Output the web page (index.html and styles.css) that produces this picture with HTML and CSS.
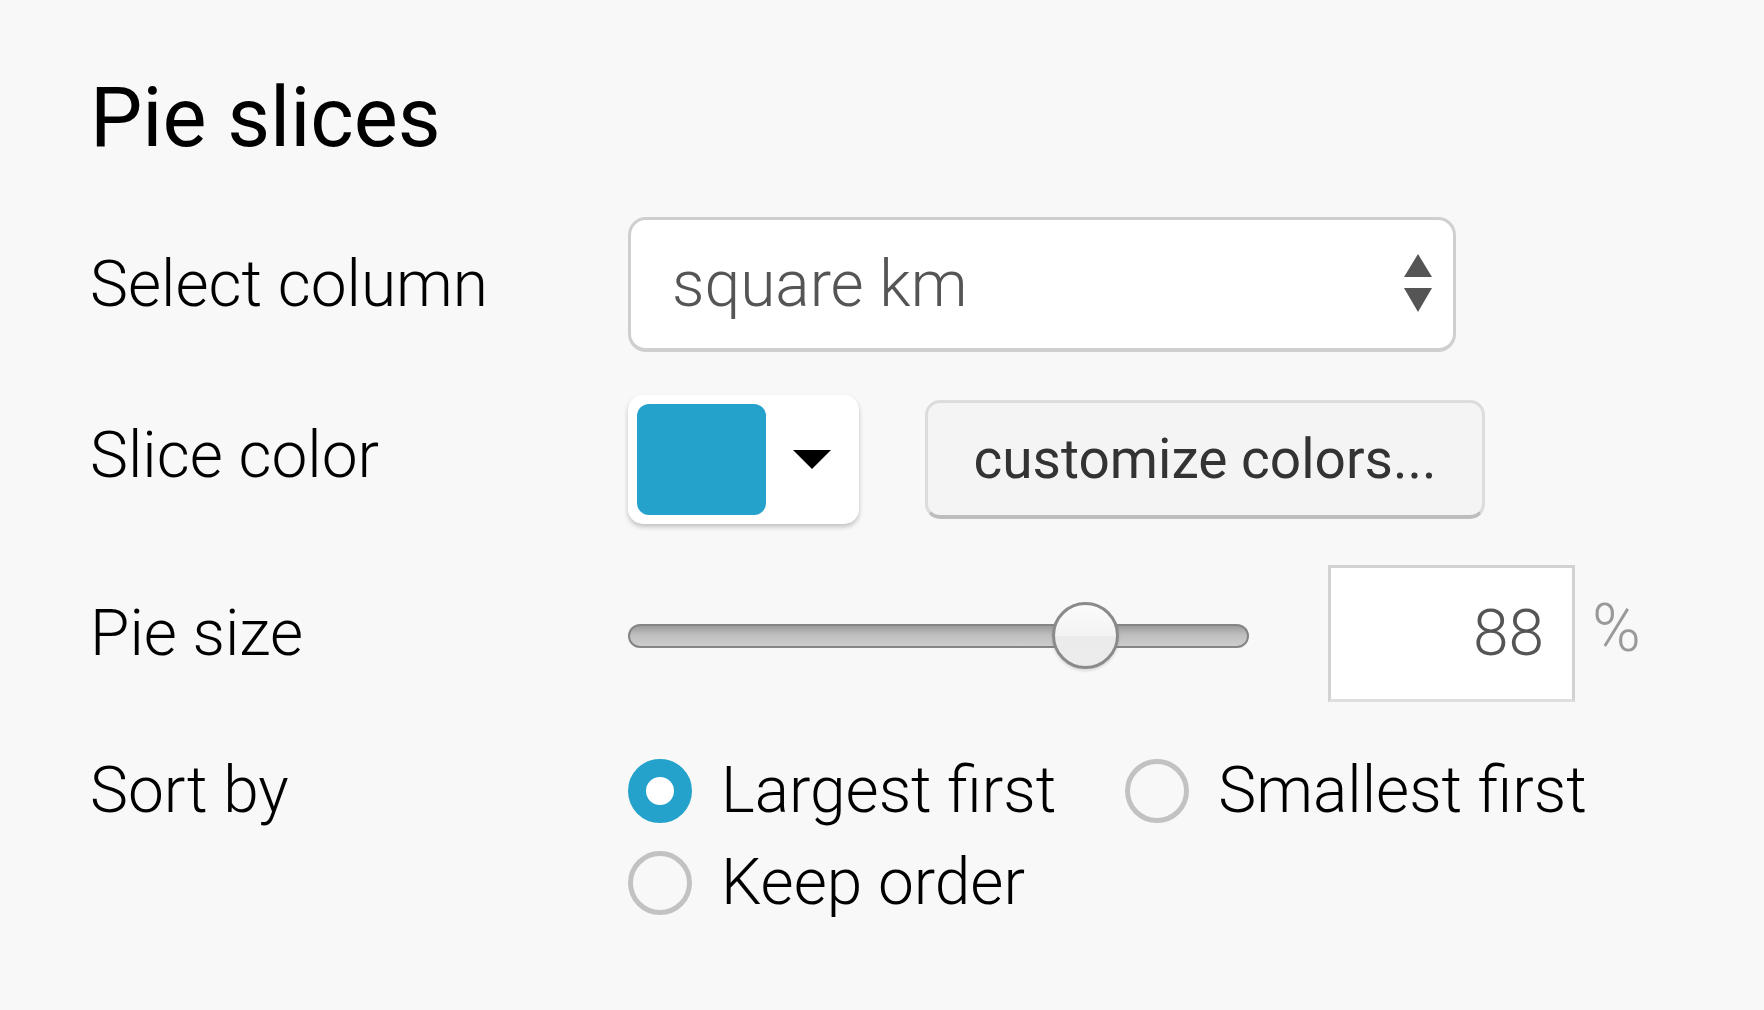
FILE: index.html
```html
<!DOCTYPE html>
<html>
<head>
<meta charset="utf-8">
<link rel="stylesheet" href="styles.css">
</head>
<body>
<div class="panel">
  <h1 class="title">Pie slices</h1>

  <div class="row row-select">
    <div class="label">Select column</div>
    <div class="select">
      <span class="select-text">square km</span>
      <svg class="select-arrows" width="30" height="60" viewBox="0 0 30 60">
        <polygon points="15,0 29,23 1,23" fill="#555"/>
        <polygon points="1,34 29,34 15,58" fill="#555"/>
      </svg>
    </div>
  </div>

  <div class="row row-color">
    <div class="label label-color">Slice color</div>
    <div class="swatch-box">
      <div class="swatch"></div>
      <svg class="swatch-caret" width="38" height="19" viewBox="0 0 38 19">
        <polygon points="0,0 38,0 19,19" fill="#000"/>
      </svg>
    </div>
    <div class="btn">customize colors...</div>
  </div>

  <div class="row row-size">
    <div class="label">Pie size</div>
    <div class="slider">
      <div class="track"></div>
      <div class="thumb"></div>
    </div>
    <div class="num">88</div>
    <div class="pct">%</div>
  </div>

  <div class="row row-sort">
    <div class="label">Sort by</div>
    <div class="radios">
      <div class="opt"><span class="radio checked"></span><span class="opt-text">Largest first</span></div>
      <div class="opt"><span class="radio"></span><span class="opt-text">Smallest first</span></div>
      <div class="opt"><span class="radio"></span><span class="opt-text">Keep order</span></div>
    </div>
  </div>
</div>
</body>
</html>
```

FILE: styles.css
```css
html, body {
  margin: 0;
  padding: 0;
  background: #f8f8f8;
}

body {
  font-family: Roboto, "Liberation Sans", sans-serif;
  color: #000;
  width: 1764px;
  height: 1010px;
  overflow: hidden;
}

.panel {
  padding: 76px 0 0 90px;
}

.title {
  margin: 0 0 57px 0;
  font-size: 83px;
  line-height: 84px;
  font-weight: 400;
}

.row {
  display: flex;
  align-items: center;
}

.row-color {
  margin-top: 43px;
}

.row-size {
  margin-top: 41px;
}

.row-sort {
  margin-top: 43px;
  align-items: flex-start;
}

.label {
  flex: none;
  width: 538px;
  font-size: 64px;
  font-weight: 300;
  line-height: 1;
}

.label-color {
  margin-bottom: 7px;
}

/* Select */
.select {
  box-sizing: border-box;
  width: 828px;
  height: 135px;
  background: #fff;
  border: 3px solid #cfcfcf;
  border-bottom-width: 4px;
  border-radius: 18px;
  display: flex;
  align-items: center;
  justify-content: space-between;
  padding: 0 20px 0 41px;
}

.select-text {
  font-size: 64px;
  font-weight: 300;
  color: #555;
}

.select-arrows {
  display: block;
}

/* Color */
.swatch-box {
  box-sizing: border-box;
  width: 231px;
  height: 129px;
  background: #fff;
  border-radius: 15px;
  box-shadow: 0 3px 5px rgba(0, 0, 0, 0.22);
  padding: 9px;
  display: flex;
  align-items: center;
}

.swatch {
  width: 129px;
  height: 111px;
  background: #24a2cc;
  border-radius: 12px;
}

.swatch-caret {
  display: block;
  margin-left: 27px;
}

.btn {
  box-sizing: border-box;
  margin-left: 66px;
  width: 560px;
  height: 119px;
  background: #f4f4f4;
  border: 3px solid #dcdcdc;
  border-bottom: 4px solid #bdbdbd;
  border-radius: 15px;
  display: flex;
  align-items: center;
  justify-content: center;
  font-size: 55px;
  font-weight: 400;
  color: #333;
}

/* Slider */
.slider {
  position: relative;
  width: 621px;
  height: 70px;
  margin-top: 4px;
  display: flex;
  align-items: center;
}

.track {
  box-sizing: border-box;
  width: 100%;
  height: 24px;
  border: 2px solid #858585;
  border-radius: 12px;
  background: linear-gradient(#9c9c9c, #bfbfbf 45%, #cdcdcd);
}

.thumb {
  position: absolute;
  left: 424px;
  top: 1px;
  box-sizing: border-box;
  width: 67px;
  height: 67px;
  border-radius: 50%;
  border: 3px solid #8a8a8a;
  background: linear-gradient(#fbfbfb 0, #f3f3f3 50%, #ebebeb 50%, #ececec 100%);
  box-shadow: 0 2px 3px rgba(0, 0, 0, 0.12);
}

.num {
  box-sizing: border-box;
  margin-left: 79px;
  width: 247px;
  height: 137px;
  background: #fff;
  border: 3px solid #d2d2d2;
  border-bottom-color: #dedede;
  display: flex;
  align-items: center;
  justify-content: flex-end;
  padding-right: 28px;
  font-size: 64px;
  font-weight: 300;
  color: #555;
}

.pct {
  margin-left: 17px;
  margin-bottom: 10px;
  font-size: 66px;
  font-weight: 300;
  color: #999;
}

/* Radios */
.row-sort .label {
  line-height: 92px;
}

.radios {
  width: 1000px;
  display: flex;
  flex-wrap: wrap;
  column-gap: 69px;
}

.opt {
  display: flex;
  align-items: center;
  height: 92px;
}

.radio {
  box-sizing: border-box;
  width: 64px;
  height: 64px;
  border-radius: 50%;
  border: 5px solid #c2c2c2;
  background: transparent;
  flex: none;
}

.radio.checked {
  border: 18px solid #24a2cc;
  background: #fff;
}

.opt-text {
  margin-left: 29px;
  font-size: 64px;
  font-weight: 300;
  line-height: 1;
}
```
